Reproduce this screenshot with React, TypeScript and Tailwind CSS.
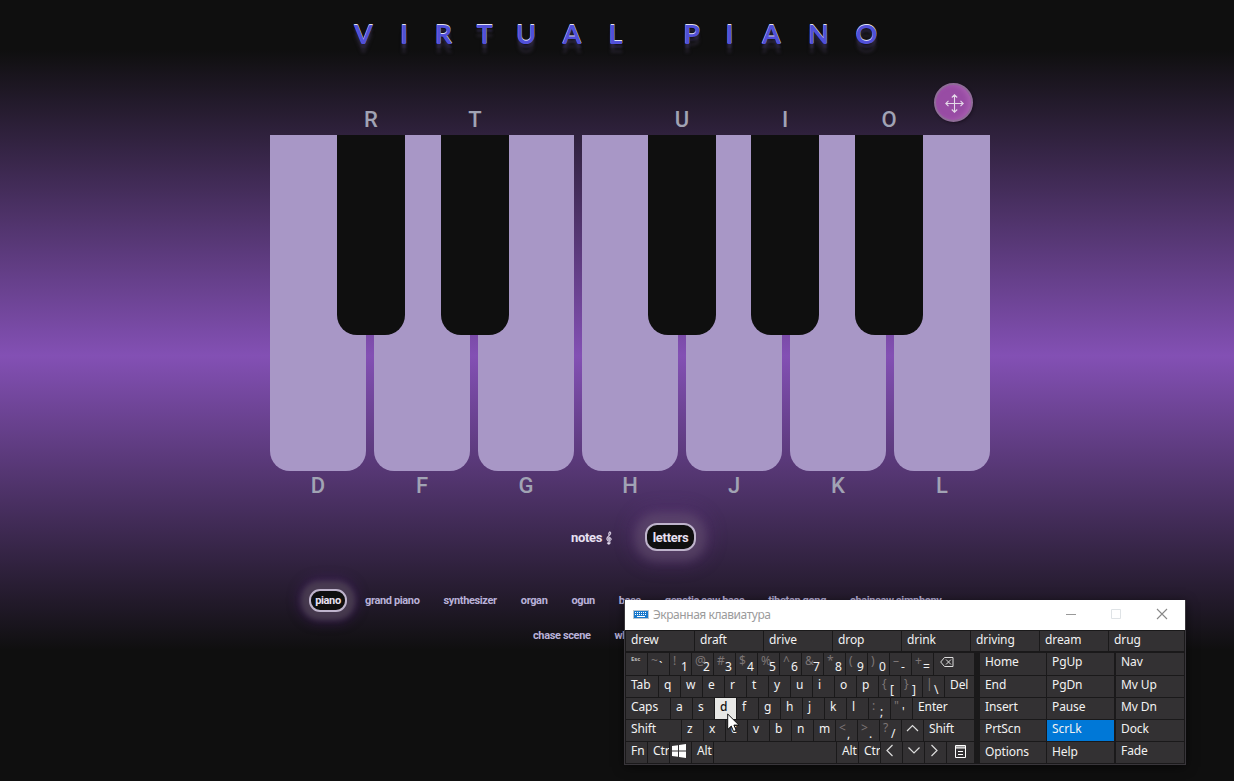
import React from "react";
import { GiGClef } from "react-icons/gi";

const firstWord: [string, string][] = [
  ["V", "w-[37px]"], ["I", "w-[44px]"], ["R", "w-[35px]"], ["T", "w-[47px]"],
  ["U", "w-[36px]"], ["A", "w-[56px]"], ["L", "w-[31px]"],
];
const secondWord: [string, string][] = [
  ["P", "w-[37px]"], ["I", "w-[39px]"], ["A", "w-[45px]"], ["N", "w-[49px]"], ["O", "w-[47px]"],
];

function Word({ letters }: { letters: [string, string][] }) {
  return (
    <span className="flex">
      {letters.map(([c, w], i) => (
        <span key={i} className={`flex justify-center ${w}`}>{c}</span>
      ))}
    </span>
  );
}

const whites = ["D", "F", "G", "H", "J", "K", "L"];
const blacks: [string, string][] = [
  ["R", "left-[67px]"], ["T", "left-[171px]"], ["U", "left-[378px]"], ["I", "left-[481px]"], ["O", "left-[585px]"],
];

function Piano() {
  return (
    <section className="relative mx-auto mt-[65px] w-[720px] translate-x-[13px] font-medium text-[22px] leading-[26px] text-[#a1a3b4]">
      <div className="flex gap-2">
        {whites.map((n) => (
          <div key={n} className="flex w-24 flex-col items-center">
            <div className="h-[336px] w-full rounded-b-[20px] bg-[#a897c6]" />
            <span className="mt-[2px]">{n}</span>
          </div>
        ))}
      </div>
      {blacks.map(([n, pos]) => (
        <div key={n} className={`absolute top-[-28px] flex w-[68px] flex-col items-center ${pos}`}>
          <span className="h-7">{n}</span>
          <div className="h-[200px] w-full rounded-b-[20px] bg-[#0f0f0f]" />
        </div>
      ))}
      <div className="absolute left-[664px] top-[-52px] flex size-[39px] items-center justify-center rounded-full border-2 border-[#8f6c98] bg-[#984ca4] pl-[2px] pt-[2px] shadow-[inset_-3px_0_5px_#a85fb0,1px_1px_3px_#1b1122]">
        <svg width="19" height="19" viewBox="0 0 19 19" fill="none" stroke="#e4d9e8" strokeWidth="1.1">
          <path d="M9.5 .8v17.4M.8 9.5h17.4M6.8 3.5 9.5.8l2.7 2.7M6.8 15.5l2.7 2.7 2.7-2.7M3.5 6.8.8 9.5l2.7 2.7M15.5 6.8l2.7 2.7-2.7 2.7" />
        </svg>
      </div>
    </section>
  );
}

type K = { t?: React.ReactNode; s?: string; w?: string; c?: string; y?: string };

function Key({ t, s, w = "w-[21px]", c = "bg-[#333133]", y = "" }: K) {
  if (s) {
    return (
      <div className={`relative h-full ${w} ${c}`}>
        <span className="absolute left-[3px] top-0 leading-[16px] text-[#7d7676]">{s}</span>
        <span className="absolute left-[11px] top-[6px] leading-[16px]">{t}</span>
      </div>
    );
  }
  return <div className={`h-full overflow-hidden whitespace-nowrap pl-[5px] ${w} ${c} ${y}`}>{t}</div>;
}

const k = (str: string): K[] => str.split("").map((t) => ({ t }));

function Chevron({ d }: { d: string }) {
  return (
    <svg width="13" height="13" viewBox="0 0 13 13" fill="none" stroke="#ddd" strokeWidth="1.2" className="mt-[2px] -ml-[1px]">
      <path d={d} />
    </svg>
  );
}

const rows: K[][] = [
  [
    { t: <span className="block text-[6px] font-bold leading-[12px] text-[#bbb]">Esc</span> },
    { s: "~", t: "`" }, { s: "!", t: "1" }, { s: "@", t: "2" }, { s: "#", t: "3" }, { s: "$", t: "4" },
    { s: "%", t: "5" }, { s: "^", t: "6" }, { s: "&", t: "7" }, { s: "*", t: "8" }, { s: "(", t: "9" },
    { s: ")", t: "0" }, { s: "–", t: "-" }, { s: "+", t: "=" },
    {
      w: "w-[40px]",
      t: (
        <svg width="14" height="10" viewBox="0 0 14 10" fill="none" stroke="#ddd" strokeWidth="1" className="mt-1 ml-[1px]">
          <path d="M.7 5 4.5.5h8.500v9H4.5zM6 2.500l5 5M11 2.500l-5 5" />
        </svg>
      ),
    },
  ],
  [
    { t: "Tab", w: "w-[32px]" }, ...k("qwertyuiop"), { s: "{", t: "[" }, { s: "}", t: "]" }, { s: "|", t: "\\" },
    { t: "Del", w: "w-[29px]" },
  ],
  [
    { t: "Caps", w: "w-[44px]" }, ...k("as"), { t: "d", c: "bg-[#e8e8e6] text-[#111] font-medium" }, ...k("fghjkl"),
    { s: ":", t: ";" }, { s: "\"", t: "'" }, { t: "Enter", w: "w-[61px]" },
  ],
  [
    { t: "Shift", w: "w-[55px]" }, ...k("zxcvbnm"), { s: "<", t: "," }, { s: ">", t: "." }, { s: "?", t: "/" },
    { t: <Chevron d="M1 9 6.500 3.500 12 9" /> }, { t: "Shift", w: "w-[50px]" },
  ],
  [
    { t: "Fn" }, { t: "Ctrl" },
    {
      t: (
        <svg width="14" height="14" viewBox="0 0 14 14" fill="#fff" className="mt-[2px] -ml-[3px]">
          <path d="M0 2 6 1.2V6.5H0zM7 1 14 0V6.5H7zM0 7.5H6V12.8L0 12zM7 7.5H14V14L7 13z" />
        </svg>
      ),
    },
    { t: "Alt" }, { w: "w-[122px]" }, { t: "Alt" }, { t: "Ctrl" },
    { t: <Chevron d="M7.500 1 2 6.500 7.500 12" /> }, { t: <Chevron d="M1.500 3.500 7 9 12.500 3.500" /> }, { t: <Chevron d="M2.500 1 8 6.500 2.500 12" /> },
    {
      w: "w-[27px]",
      t: (
        <svg width="11" height="13" viewBox="0 0 11 13" fill="none" stroke="#fff" className="mt-[3px] ml-[3px]">
          <path d="M.5 .5h10v12H.5zM.5 2h10M.5 3h10M3 6.500h5M3 9.500h5" />
        </svg>
      ),
    },
  ],
];

const navRows = [
  ["Home", "PgUp", "Nav"], ["End", "PgDn", "Mv Up"], ["Insert", "Pause", "Mv Dn"],
  ["PrtScn", "ScrLk", "Dock"], ["Options", "Help", "Fade"],
];

function ScreenKeyboard() {
  return (
    <div className="absolute left-[624px] top-[600px] h-[165px] w-[562px] border-x border-b border-[#39363b] bg-[#1a191a] text-[12px] leading-[18px] tracking-[-0.1px] text-[#f2f2f2] shadow-[0_2px_10px_#0008] [font-family:'Noto_Sans','Open_Sans',sans-serif]">
      <div className="flex h-[30px] items-center bg-white pl-[8px] text-[#9b9b9b]">
        <svg width="16" height="9" viewBox="0 0 16 9" className="-mt-px mr-[4px]">
          <rect width="16" height="9" fill="#b9c6d0" />
          <rect x="1" y="1" width="14" height="7" fill="#1878cc" />
          <path d="M2 2.500h12M2 4.500h12" stroke="#fff" strokeDasharray="1 1" />
          <path d="M4 6.500h8" stroke="#fff" />
        </svg>
        <span className="flex-1 tracking-[-0.45px]">Экранная клавиатура</span>
        <svg width="104" height="12" viewBox="0 0 104 12" fill="none" className="-mt-[2px] mr-[17px]">
          <path d="M2 6.500h10" stroke="#999" />
          <path d="M47.500 1.500h9v9h-9z" stroke="#dfe3e6" />
          <path d="M93 1l10 10M103 1 93 11" stroke="#888" strokeWidth="1.1" />
        </svg>
      </div>
      <div className="mt-px flex h-[20px] gap-px pl-px">
        {["drew", "draft", "drive", "drop", "drink", "driving", "dream", "drug"].map((w, i) => (
          <div key={w} className={`bg-[#333133] pl-[5px] ${i === 7 ? "w-[75px]" : "w-[68px]"}`}>{w}</div>
        ))}
      </div>
      <div className="mt-[2px] flex flex-col gap-px pl-px">
        {rows.map((r, i) => (
          <div key={i} className={`flex gap-px ${i === 0 ? "h-[22px]" : "h-[21px]"}`}>
            {r.map((key, j) => <Key key={j} {...key} />)}
            <div className="ml-[5px] flex h-full gap-px">
              <Key t={navRows[i][0]} w="w-[66px]" y={i === 4 ? "pt-px" : ""} />
              <Key t={navRows[i][1]} w="w-[67px]" c={i === 3 ? "bg-[#0078d7]" : "bg-[#333133]"} y={i === 4 ? "pt-px" : ""} />
              <div className="ml-px h-full"><Key t={navRows[i][2]} w="w-[68px]" /></div>
            </div>
          </div>
        ))}
      </div>
    </div>
  );
}

export default function App() {
  return (
    <main className="relative h-[781px] w-[1234px] overflow-hidden bg-[#0e0e0e] bg-[linear-gradient(to_bottom,#0f0f0f_50px,#8350b4_356px,#0f0f0f_650px)] [font-family:Roboto,sans-serif]">
      <h1 className="flex h-[70px] gap-[42px] pl-[345px] pt-[14px] text-[27px] font-bold leading-[40px] text-[#5150d8] [font-family:Lato,sans-serif] [text-shadow:0_-1px_0_#e0e0f0,0_4px_2px_#37305a80,0_9px_3px_#302a3c80]">
        <Word letters={firstWord} />
        <Word letters={secondWord} />
      </h1>
      <Piano />
      <div className="mt-[24px] flex h-[28px] items-center pl-[571px] text-[13px] font-bold tracking-[-0.3px] text-[#e8e0f2]">
        <span className="flex w-[74px] items-center gap-[2px] pt-[2px]">notes <GiGClef className="-ml-[2px] size-[14px]" stroke="currentColor" strokeWidth="14" /></span>
        <span className="flex h-[28px] w-[51px] items-center justify-center rounded-[12px] border-2 border-[#bfb4cc] bg-[#0f0f0f] pt-[2px] shadow-[0_0_8px_10px_#6c607066,0_0_18px_14px_#65358755]">letters</span>
      </div>
      <div className="mt-[38px] flex h-[23px] items-center gap-6 whitespace-nowrap pl-[315px] text-[11px] font-bold tracking-[-0.36px] text-[#b9b1d8]">
        <span className="-mx-[6px] flex h-[23px] w-[38px] shrink-0 items-center justify-center rounded-[11px] border-2 border-[#bfb4cc] bg-[#0f0f0f] pt-px text-[#e8e0f2] shadow-[0_0_5px_8px_#514a52aa,0_0_12px_10px_#4a206c88]">piano</span>
        {["grand piano", "synthesizer", "organ", "ogun", "bass", "genetic saw bass", "tibetan gong", "chainsaw simphony"].map((t) => (
          <span key={t} className="pt-[2px]">{t}</span>
        ))}
      </div>
      <div className="mt-[12px] flex h-[23px] items-center gap-6 pl-[533px] pt-[2px] text-[11px] font-bold tracking-[-0.36px] text-[#b9b1d8]">
        <span>chase scene</span><span>wh</span>
      </div>
      <ScreenKeyboard />
      <svg width="13" height="20" viewBox="0 0 13 20" className="absolute left-[727px] top-[713px]">
        <path d="M.7 1v15.500l3.600-3.400 2.300 5.400 2.600-1.100-2.300-5.300h5z" fill="#fff" stroke="#111" />
      </svg>
    </main>
  );
}
